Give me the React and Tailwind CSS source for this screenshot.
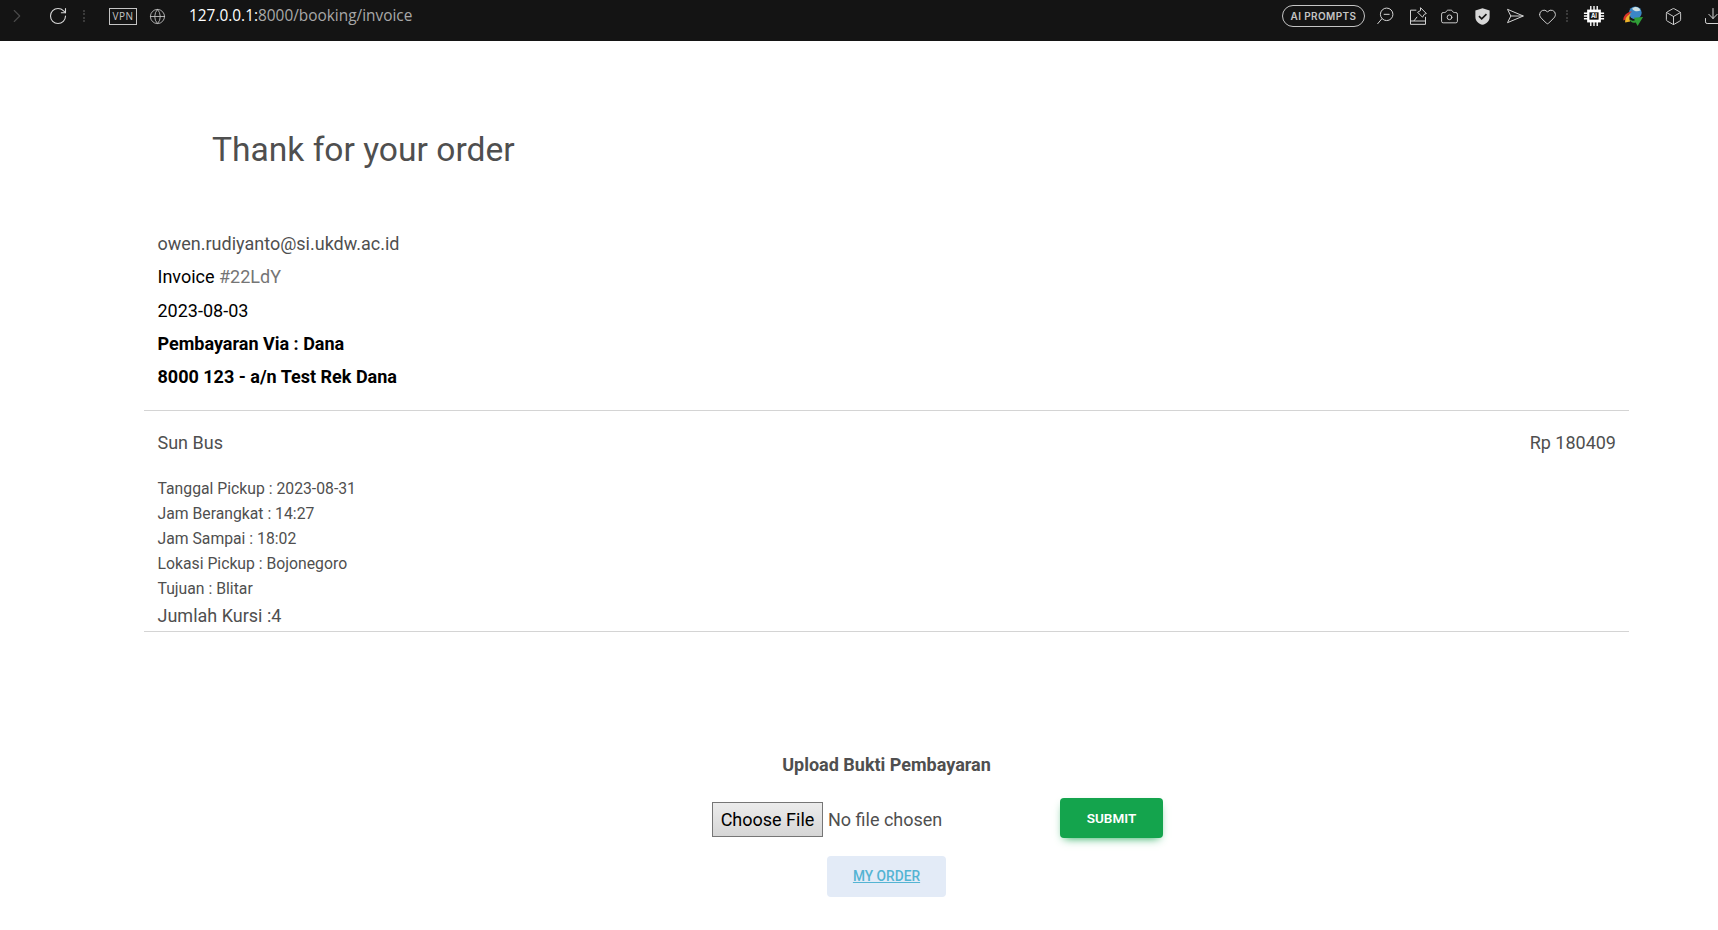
import { RotateCw, ChevronRight, Globe, Camera, Heart, Box, Download } from 'lucide-react';

const AppIcon = ({ children, className = '' }) => (
  <svg viewBox="0 0 24 24" fill="none" stroke="currentColor" strokeWidth="1.2" className={`w-[20px] h-[20px] text-[#d4d4d4] ${className}`}>
    {children}
  </svg>
);

const BrowserBar = () => (
  <div className="h-[41px] pb-[9px] bg-[#141414] flex items-center text-[#d4d4d4] overflow-hidden">
    <ChevronRight className="w-[22px] h-[22px] ml-[6px] text-[#4a4a4a]" strokeWidth={1.2} />
    <RotateCw className="w-[20px] h-[20px] ml-[20px] text-[#d8d8d8]" strokeWidth={1.3} />
    <div className="ml-[15px] w-[2px] h-[12px] border-l-2 border-dotted border-[#3a3a3a]" />
    <div className="ml-[24px] w-[28px] h-[17px] border border-[#c4c4c4] text-[10px] leading-[15px] text-center tracking-[0.5px] text-[#c4c4c4] font-['Open_Sans',sans-serif]">VPN</div>
    <Globe className="w-[17px] h-[17px] ml-[12px] text-[#c4c4c4]" strokeWidth={1.2} />
    <div className="ml-[23px] text-[15.400px] font-['Open_Sans',sans-serif] text-[#a8a8a8]"><span className="text-white">127.0.0.1:</span>8000/booking/invoice</div>
    <div className="ml-auto flex items-center">
      <div className="w-[83px] h-[22px] -ml-[1px] rounded-full border border-[#c4c4c4] text-[10px] leading-[20px] text-center font-semibold tracking-[0.4px] text-[#c4c4c4] font-['Inter',sans-serif]">AI PROMPTS</div>
      <AppIcon className="ml-[10px]">
        <circle cx="14" cy="10" r="7.500" />
        <path d="M8.500 15 3 21.500M10.500 10h7" />
      </AppIcon>
      <AppIcon className="ml-[13px]">
        <path d="M10 5H3v17h18v-9M3 18h18M7 18l4-5" />
        <path d="m15 2 7 7-2.500 1-2 3.500-6-6L15 5.500Z" />
      </AppIcon>
      <Camera className="w-[19px] h-[19px] ml-[12px]" strokeWidth={1.2} />
      <svg viewBox="0 0 24 24" className="w-[19px] h-[19px] ml-[14px]">
        <path d="M12 1.5 21 4.5v8c0 5-4 8.5-9 10-5-1.500-9-5-9-10v-8Z" fill="#d8d8d8" />
        <path d="m7.500 11.500 3.500 3.500 6-6" fill="none" stroke="#141414" strokeWidth="2" />
      </svg>
      <AppIcon className="ml-[13px]">
        <path d="M3 4 22 12 3 20l4-8ZM7 12h15" />
      </AppIcon>
      <Heart className="w-[19px] h-[19px] ml-[13px]" strokeWidth={1.2} />
      <div className="ml-[9px] w-[2px] h-[12px] border-l-2 border-dotted border-[#3a3a3a]" />
      <svg viewBox="0 0 24 24" className="w-[22px] h-[22px] ml-[15px]">
        <path d="M8.500 1v22M12 1v22M15.500 1v22M1 9h22M1 12h22M1 15h22" stroke="#fff" strokeWidth="1.5" />
        <rect x="4.500" y="5" width="15" height="14" fill="#fff" />
        <rect x="7" y="8" width="10" height="8" fill="#141414" />
        <text x="12" y="14.500" textAnchor="middle" fontSize="6.500" fontWeight="700" fill="#fff" fontFamily="Inter, sans-serif">AI</text>
      </svg>
      <svg viewBox="0 0 24 24" className="w-[22px] h-[22px] ml-[17px]">
        <circle cx="14.500" cy="8.500" r="7" fill="#3b86c6" />
        <path d="M11 4c3-3 8-2 9 2-2 1-6 2-9-2Z" fill="#cfe0e0" />
        <path d="M1.500 17C1 12 5 7.500 11 7c-3 2-5 4.500-4.500 8Z" fill="#d9342b" />
        <path d="M3.500 19C3 15 5.500 11 9.500 9.500 8 12 7.500 15 9 18Z" fill="#eeb32a" />
        <path d="M8 15c2 2 4 2.500 6 2l-1-3 10-1-6 10-2-4c-3 1-6 0-7-4Z" fill="#2f9e36" />
      </svg>
      <Box className="w-[19px] h-[19px] ml-[20px]" strokeWidth={1.2} />
      <Download className="w-[20px] h-[20px] ml-[20px] -mr-[5px]" strokeWidth={1.2} />
    </div>
  </div>
);

const Detail = ({ children }) => <div className="h-[25px] leading-[25px]">{children}</div>;

export default function App() {
  return (
    <div className="min-h-[930px] bg-white font-['Roboto',sans-serif] text-[18px] text-[#4f4f4f]">
      <BrowserBar />

      <div className="ml-[144px] mr-[89px] pt-[85px]">
        <h3 className="ml-[68px] text-[33.600px] leading-[48px] font-normal">Thank for your order</h3>

        <div className="mt-[56px] pl-[13.500px] pr-[13px] flex flex-col gap-[6.300px] leading-[27px]">
          <div>owen.rudiyanto@si.ukdw.ac.id</div>
          <div className="text-black">Invoice <span className="text-[#757575]">#22LdY</span></div>
          <div className="text-black">2023-08-03</div>
          <div className="text-black font-bold">Pembayaran Via : Dana</div>
          <div className="text-black font-bold">8000 123 - a/n Test Rek Dana</div>
        </div>

        <hr className="mt-[20px] border-[#d4d4d4]" />

        <div className="pl-[13.500px] pr-[13px] pt-[19px] pb-[2px]">
          <div className="flex justify-between leading-[26.400px]">
            <span>Sun Bus</span>
            <span>Rp 180409</span>
          </div>
          <div className="mt-[19px] text-[15.750px]">
            <Detail>Tanggal Pickup : 2023-08-31</Detail>
            <Detail>Jam Berangkat : 14:27</Detail>
            <Detail>Jam Sampai : 18:02</Detail>
            <Detail>Lokasi Pickup : Bojonegoro</Detail>
            <Detail>Tujuan : Blitar</Detail>
          </div>
          <div className="leading-[26.400px] mt-[2px]">Jumlah Kursi :4</div>
        </div>

        <hr className="border-[#d4d4d4]" />

        <div className="flex flex-col items-center pt-[120px]">
          <div className="font-bold leading-[26px]">Upload Bukti Pembayaran</div>
          <div className="mt-[22px] ml-[102px] w-[451px] flex items-center justify-between">
            <div className="flex items-center gap-[5px]">
              <button className="w-[111px] h-[35px] border border-[#767676] bg-gradient-to-b from-[#ececec] to-[#d6d6d6] text-black">Choose File</button>
              <span>No file chosen</span>
            </div>
            <button className="w-[103px] h-[40px] -mt-[2px] pt-[1px] rounded-[4px] bg-[#14a44d] text-white text-[13.500px] font-semibold shadow-[0_4px_9px_-4px_#14a44d]">SUBMIT</button>
          </div>
          <a className="mt-[18px] w-[119px] h-[41px] rounded-[4px] bg-[#e3ebf7] flex items-center justify-center text-[13.750px] font-medium text-[#54b4d3] underline">MY ORDER</a>
        </div>
      </div>
    </div>
  );
}
